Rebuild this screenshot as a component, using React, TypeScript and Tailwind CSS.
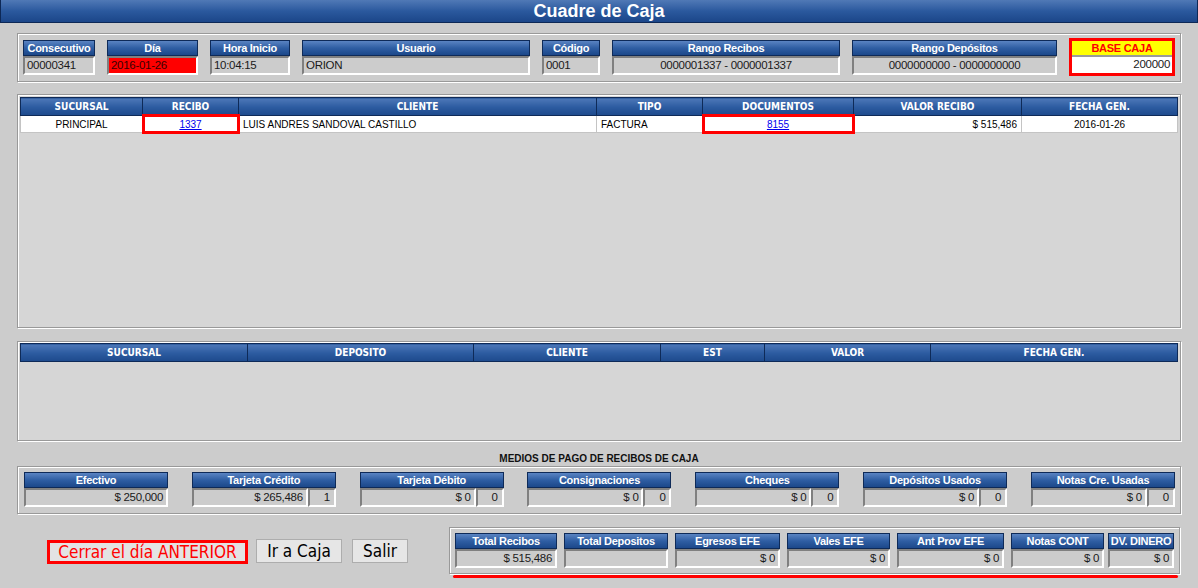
import React from 'react';

const SANS = "font-['Liberation_Sans',Arial,sans-serif]";
const HEAD =
  "h-4 flex items-center justify-center text-white font-bold text-[11px] tracking-tight leading-none border border-[#0e2a58] bg-linear-to-b from-[#5a84c2] via-[#2f5ea3] to-[#1c488a] whitespace-nowrap overflow-hidden";
const BEVEL = "border-2 border-t-[#808080] border-l-[#808080] border-b-white border-r-white";
const TH =
  "h-[18px] p-0 text-[10px] font-bold text-white text-center border border-[#0e2a58] bg-linear-to-b from-[#4d78b8] via-[#2d5ca1] to-[#1d4a8c] font-['DejaVu_Sans_Condensed','Liberation_Sans',sans-serif]";
const TD = "h-[17px] p-0 px-1 text-[10px] text-black border border-[#c4c4c4] bg-white whitespace-nowrap";
const VALUE = "text-[11.5px] tracking-tight leading-none text-[#1a1a1a]";

type Child = { children?: React.ReactNode; className?: string };

function Frame({ children, className = '' }: Child) {
  return (
    <div className={`border border-[#999999] shadow-[inset_1px_1px_0_#ffffff,1px_1px_0_#ffffff] ${className}`}>
      {children}
    </div>
  );
}

interface FieldProps {
  label: string;
  value: string;
  width: string;
  valueClass?: string;
}

function Field({ label, value, width, valueClass = 'justify-start bg-[#cccccc]' }: FieldProps) {
  return (
    <div className={`${width} flex flex-col`}>
      <div className={HEAD}>{label}</div>
      <div className={`h-[19px] flex items-center px-[2px] ${VALUE} ${BEVEL} ${valueClass}`}>
        {value}
      </div>
    </div>
  );
}

interface PayProps {
  label: string;
  value: string;
  count?: string;
}

function PayBox({ label, value, count }: PayProps) {
  return (
    <div className="w-[144px] flex flex-col">
      <div className={HEAD}>{label}</div>
      <div className="flex h-[19px]">
        <div className={`flex-1 flex items-center justify-end px-[3px] bg-[#cccccc] ${VALUE} ${BEVEL}`}>
          {value}
        </div>
        {count !== undefined && (
          <div className={`w-[28px] flex items-center justify-end px-[4px] bg-[#cccccc] ${VALUE} ${BEVEL}`}>
            {count}
          </div>
        )}
      </div>
    </div>
  );
}

function TotalBox({ label, value, width }: { label: string; value: string; width: string }) {
  return (
    <div className={`${width} flex flex-col`}>
      <div className={HEAD}>{label}</div>
      <div className={`h-[19px] flex items-center justify-end px-[3px] bg-[#cccccc] ${VALUE} ${BEVEL}`}>
        {value}
      </div>
    </div>
  );
}

const medios: PayProps[] = [
  { label: 'Efectivo', value: '$ 250,000' },
  { label: 'Tarjeta Crédito', value: '$ 265,486', count: '1' },
  { label: 'Tarjeta Débito', value: '$ 0', count: '0' },
  { label: 'Consignaciones', value: '$ 0', count: '0' },
  { label: 'Cheques', value: '$ 0', count: '0' },
  { label: 'Depósitos Usados', value: '$ 0', count: '0' },
  { label: 'Notas Cre. Usadas', value: '$ 0', count: '0' },
];

export default function App() {
  return (
    <div className={`w-[1198px] h-[588px] bg-[#cccccc] overflow-hidden ${SANS}`}>
      {/* barra de titulo */}
      <div className="h-[23px] flex items-center justify-center border-l border-r border-b border-[#0d2856] bg-linear-to-b from-[#5079b6] via-[#2b599e] to-[#1b4689]">
        <span className="text-white font-bold text-[18px] leading-none">Cuadre de Caja</span>
      </div>

      {/* datos de la caja */}
      <Frame className="mx-[17px] mt-[10px] h-[49px] pl-[5px] pt-[6px] flex items-start gap-3">
        <Field label="Consecutivo" value="00000341" width="w-[72px]" />
        <Field label="Día" value="2016-01-26" width="w-[91px]" valueClass="justify-start bg-[#ff0000] text-[#3a0000]" />
        <Field label="Hora Inicio" value="10:04:15" width="w-[80px]" />
        <Field label="Usuario" value="ORION" width="w-[228px]" />
        <Field label="Código" value="0001" width="w-[58px]" />
        <Field label="Rango Recibos" value="0000001337 - 0000001337" width="w-[228px]" valueClass="justify-center bg-[#cccccc]" />
        <Field label="Rango Depósitos" value="0000000000 - 0000000000" width="w-[205px]" valueClass="justify-center bg-[#cccccc]" />
        <div className="w-[106px] h-[38px] -mt-[2px] border-[3px] border-[#ff0000] flex flex-col">
          <div className="h-[14px] flex items-center justify-center bg-[#ffff00] text-[#ff0000] font-bold text-[11px] tracking-tight leading-none">
            BASE CAJA
          </div>
          <div className={`flex-1 flex items-center justify-end px-[2px] bg-white border-t-2 border-t-[#9a9a9a] ${VALUE}`}>
            200000
          </div>
        </div>
      </Frame>

      {/* recibos */}
      <Frame className="mx-[17px] mt-[12px] h-[234px] bg-[#d6d6d6] px-[2px] pt-[2px]">
        <table className="w-full table-fixed border-collapse">
          <colgroup>
            <col className="w-[122px]" />
            <col className="w-[96px]" />
            <col className="w-[358px]" />
            <col className="w-[106px]" />
            <col className="w-[151px]" />
            <col className="w-[168px]" />
            <col />
          </colgroup>
          <thead>
            <tr>
              <th className={TH}>SUCURSAL</th>
              <th className={TH}>RECIBO</th>
              <th className={TH}>CLIENTE</th>
              <th className={TH}>TIPO</th>
              <th className={TH}>DOCUMENTOS</th>
              <th className={TH}>VALOR RECIBO</th>
              <th className={TH}>FECHA GEN.</th>
            </tr>
          </thead>
          <tbody>
            <tr>
              <td className={`${TD} text-center`}>PRINCIPAL</td>
              <td className={`${TD} text-center relative`}>
                <a className="text-[#0000ee] underline">1337</a>
                <span className="absolute -top-[2px] -bottom-[2px] -left-[1px] -right-[2px] border-[3px] border-[#ff0000]" />
              </td>
              <td className={TD}>LUIS ANDRES SANDOVAL CASTILLO</td>
              <td className={TD}>FACTURA</td>
              <td className={`${TD} text-center relative`}>
                <a className="text-[#0000ee] underline">8155</a>
                <span className="absolute -top-[2px] -bottom-[2px] -left-[1px] -right-[2px] border-[3px] border-[#ff0000]" />
              </td>
              <td className={`${TD} text-right`}>$ 515,486</td>
              <td className={`${TD} text-center`}>2016-01-26</td>
            </tr>
          </tbody>
        </table>
      </Frame>

      {/* depositos */}
      <Frame className="mx-[17px] mt-[13px] h-[100px] bg-[#d6d6d6] px-[2px] pt-[1px]">
        <table className="w-full table-fixed border-collapse">
          <colgroup>
            <col className="w-[227px]" />
            <col className="w-[226px]" />
            <col className="w-[187px]" />
            <col className="w-[104px]" />
            <col className="w-[166px]" />
            <col />
          </colgroup>
          <thead>
            <tr>
              <th className={TH}>SUCURSAL</th>
              <th className={TH}>DEPOSITO</th>
              <th className={TH}>CLIENTE</th>
              <th className={TH}>EST</th>
              <th className={TH}>VALOR</th>
              <th className={TH}>FECHA GEN.</th>
            </tr>
          </thead>
        </table>
      </Frame>

      <div className="mt-[11px] h-[14px] leading-[14px] text-center text-[10px] font-bold text-[#111111]">
        MEDIOS DE PAGO DE RECIBOS DE CAJA
      </div>

      {/* medios de pago */}
      <Frame className="mx-[17px] h-[48px] pl-[6px] pr-[5px] pt-[5px] flex justify-between items-start">
        {medios.map((m) => (
          <PayBox key={m.label} {...m} />
        ))}
      </Frame>

      {/* acciones y totales */}
      <div className="flex items-start pl-[47px] pr-[18px] mt-[13px]">
        <div className="flex items-center mt-[13px] font-['DejaVu_Sans_Condensed','DejaVu_Sans',sans-serif]">
          <button className="w-[201px] h-[24px] border-[3px] border-[#ff0000] bg-[#e3e3e3] text-[#ff0000] text-[17px] leading-none">
            Cerrar el día ANTERIOR
          </button>
          <button className="ml-[8px] -mt-[2px] w-[86px] h-[24px] border border-[#adadad] bg-[#e6e6e6] text-black text-[17px] leading-none">
            Ir a Caja
          </button>
          <button className="ml-[10px] -mt-[2px] w-[56px] h-[24px] border border-[#adadad] bg-[#e6e6e6] text-black text-[17px] leading-none">
            Salir
          </button>
        </div>
        <div className="ml-auto flex flex-col">
          <Frame className="w-[731px] h-[47px] pl-[5px] pr-[5px] pt-[5px] flex items-start">
            <TotalBox label="Total Recibos" value="$ 515,486" width="w-[102px]" />
            <TotalBox label="Total Depositos" value="" width="w-[104px] ml-[7px]" />
            <TotalBox label="Egresos EFE" value="$ 0" width="w-[105px] ml-[7px]" />
            <TotalBox label="Vales EFE" value="$ 0" width="w-[103px] ml-[7px]" />
            <TotalBox label="Ant Prov EFE" value="$ 0" width="w-[107px] ml-[7px]" />
            <TotalBox label="Notas CONT" value="$ 0" width="w-[93px] ml-[7px]" />
            <TotalBox label="DV. DINERO" value="$ 0" width="w-[66px] ml-[4px]" />
          </Frame>
          <div className="ml-[4px] mr-[2px] mt-[1px] h-[3px] bg-[#ff0000] rounded-full" />
        </div>
      </div>
    </div>
  );
}
